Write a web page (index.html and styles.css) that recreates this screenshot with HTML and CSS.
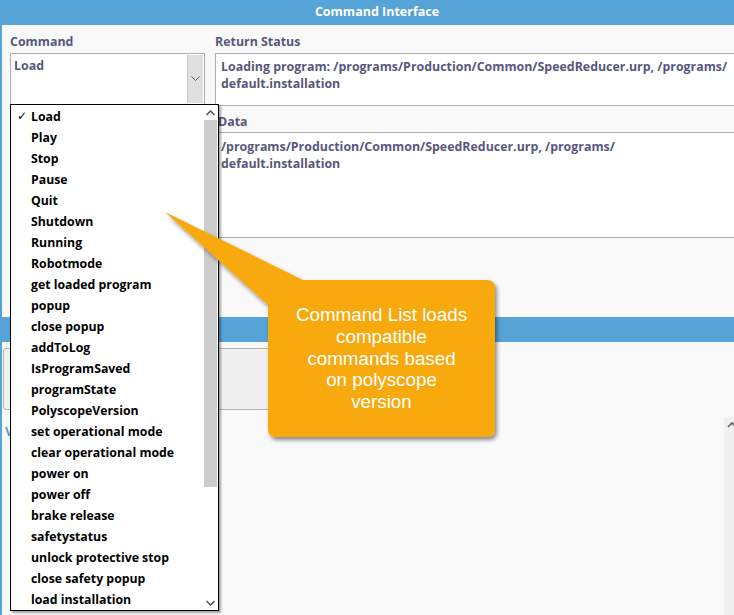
FILE: index.html
```html
<!DOCTYPE html>
<html>
<head>
<meta charset="utf-8">
<link rel="stylesheet" href="styles.css">
</head>
<body>
<div class="app">
  <header class="titlebar">Command Interface</header>
  <section class="cmd">
    <div class="col-left">
      <div class="label">Command</div>
      <div class="select">
        <span class="select-val">Load</span>
        <span class="select-btn"><svg width="9" height="6" viewBox="0 0 9 6"><path d="M0.5 0.5 L4.5 4.5 L8.5 0.5" fill="none" stroke="#606060" stroke-width="1"/></svg></span>
      </div>
    </div>
    <div class="col-right">
      <div class="label">Return Status</div>
      <div class="status">Loading program: /programs/Production/Common/SpeedReducer.urp, /programs/<br>default.installation</div>
      <div class="data">
        <div class="data-head">Data</div>
        <div class="data-body">/programs/Production/Common/SpeedReducer.urp, /programs/<br>default.installation</div>
      </div>
    </div>
  </section>
  <div class="bar"></div>
  <section class="lower">
    <div class="box"></div>
    <div class="vlabel">V</div>
  </section>

  <div class="vscroll">
    <svg width="10" height="8" viewBox="0 0 10 8"><path d="M1 6 L5 2 L9 6" fill="none" stroke="#606060" stroke-width="1.6"/></svg>
  </div>

  <div class="dropdown">
    <ul class="items">
      <li class="sel"><span class="check">✓</span>Load</li>
      <li>Play</li>
      <li>Stop</li>
      <li>Pause</li>
      <li>Quit</li>
      <li>Shutdown</li>
      <li>Running</li>
      <li>Robotmode</li>
      <li>get loaded program</li>
      <li>popup</li>
      <li>close popup</li>
      <li>addToLog</li>
      <li>IsProgramSaved</li>
      <li>programState</li>
      <li>PolyscopeVersion</li>
      <li>set operational mode</li>
      <li>clear operational mode</li>
      <li>power on</li>
      <li>power off</li>
      <li>brake release</li>
      <li>safetystatus</li>
      <li>unlock protective stop</li>
      <li>close safety popup</li>
      <li>load installation</li>
    </ul>
    <div class="dd-scroll">
      <span class="dd-arrow"><svg width="9" height="6" viewBox="0 0 9 6"><path d="M0.5 5 L4.5 1 L8.5 5" fill="none" stroke="#505050" stroke-width="1.5"/></svg></span>
      <span class="dd-thumb"></span>
      <span class="dd-track"></span>
      <span class="dd-arrow"><svg width="9" height="6" viewBox="0 0 9 6"><path d="M0.5 1 L4.5 5 L8.5 1" fill="none" stroke="#505050" stroke-width="1.5"/></svg></span>
    </div>
  </div>

  <div class="callout">
    <svg class="callout-shape" width="350" height="245" viewBox="160 205 350 245">
      <defs>
        <filter id="sh" x="-10%" y="-10%" width="130%" height="130%">
          <feGaussianBlur in="SourceAlpha" stdDeviation="2"/>
          <feOffset dx="2" dy="3" result="b"/>
          <feComponentTransfer><feFuncA type="linear" slope="0.45"/></feComponentTransfer>
          <feMerge><feMergeNode/><feMergeNode in="SourceGraphic"/></feMerge>
        </filter>
      </defs>
      <path filter="url(#sh)" fill="#f7a90c" d="M165 212 L303 280 L487 280 Q495 280 495 288 L495 429 Q495 437 487 437 L276 437 Q268 437 268 429 L268 305 Z"/>
    </svg>
    <div class="callout-text">Command List loads<br>compatible<br>commands based<br>on polyscope<br>version</div>
  </div>
</div>
</body>
</html>
```
FILE: styles.css
```css
html, body {
  margin: 0;
  padding: 0;
  overflow: hidden;
  background: #f9f9f9;
}

.app {
  position: relative;
  width: 750px;
  height: 615px;
  border-left: 2px solid #56a3d8;
  background: #f9f9f9;
  font-family: "Open Sans", "Noto Sans", sans-serif;
  font-weight: 700;
  font-size: 12.4px;
  color: #57577d;
}

.titlebar {
  height: 25px;
  line-height: 24px;
  background: #56a3d8;
  color: #ffffff;
  text-align: center;
  font-size: 12.5px;
}

.cmd {
  display: flex;
  gap: 10px;
  padding: 7px 0 0 8px;
}

.col-left {
  width: 195px;
  flex: none;
}

.col-right {
  flex: 1;
  min-width: 0;
}

.label {
  line-height: 20px;
  margin-bottom: 1px;
  white-space: nowrap;
}

.select {
  height: 50px;
  border: 1px solid #abadb3;
  background: #ffffff;
  display: flex;
}

.select-val {
  flex: 1;
  padding: 3px 3px;
  line-height: 18px;
}

.select-btn {
  width: 15px;
  background: #dfdfdf;
  border-left: 1px solid #c8c8c8;
  display: flex;
  align-items: center;
  justify-content: center;
  margin: 1px;
}

.status {
  height: 47px;
  border: 1px solid #abadb3;
  border-right: none;
  background: #ffffff;
  padding: 4px 0 0 5px;
  line-height: 17px;
  white-space: nowrap;
}

.data {
  border-left: 1px solid #abadb3;
  border-bottom: 1px solid #abadb3;
}

.data-head {
  height: 20px;
  padding-top: 6px;
  line-height: 20px;
  padding-left: 2px;
  border-bottom: 1px solid #abadb3;
}

.data-body {
  height: 99px;
  padding: 5px 0 0 5px;
  background: #ffffff;
  line-height: 17px;
  white-space: nowrap;
}

.bar {
  margin-top: 79px;
  height: 25px;
  background: #55a3d7;
}

.lower {
  padding: 6px 0 0 1px;
}

.box {
  width: 380px;
  height: 60px;
  border: 1px solid #b4b4b4;
  border-radius: 3px;
  background: #f0f0f0;
}

.vlabel {
  margin-top: 12px;
  padding-left: 2px;
  color: #5b9bd5;
  font-size: 13px;
  line-height: 18px;
}

.vscroll {
  position: absolute;
  left: 722px;
  top: 417px;
  width: 16px;
  height: 198px;
  background: #f0f0f0;
  display: flex;
  justify-content: center;
  padding-top: 4px;
  box-sizing: border-box;
}

.dropdown {
  position: absolute;
  left: 8px;
  top: 104px;
  width: 207px;
  height: 505px;
  border: 1px solid #000000;
  background: #ffffff;
  box-shadow: 2px 2px 2px rgba(0, 0, 0, 0.35);
  display: flex;
  color: #000000;
  font-size: 12.3px;
}

.items {
  list-style: none;
  margin: 0;
  padding: 1px 0 0 0;
  flex: 1;
}

.items li {
  height: 21px;
  line-height: 21px;
  padding-left: 20px;
  position: relative;
  white-space: nowrap;
}

.check {
  position: absolute;
  left: 6px;
  top: 0;
  font-weight: 400;
  font-size: 12px;
  font-family: "DejaVu Sans", sans-serif;
}

.dd-scroll {
  width: 15px;
  display: flex;
  flex-direction: column;
  align-items: stretch;
}

.dd-arrow {
  height: 15px;
  display: flex;
  align-items: center;
  justify-content: center;
}

.dd-thumb {
  height: 367px;
  background: #cdcdcd;
  margin: 0 1px;
}

.dd-track {
  flex: 1;
}

.callout {
  position: absolute;
  left: 0;
  top: 0;
  width: 0;
  height: 0;
}

.callout-shape {
  position: absolute;
  left: 158px;
  top: 205px;
}

.callout-text {
  position: absolute;
  left: 266px;
  top: 304px;
  width: 227px;
  text-align: center;
  font-family: "Liberation Sans", Arial, sans-serif;
  font-weight: 400;
  font-size: 18.8px;
  line-height: 21.8px;
  color: #ffffff;
}
```
